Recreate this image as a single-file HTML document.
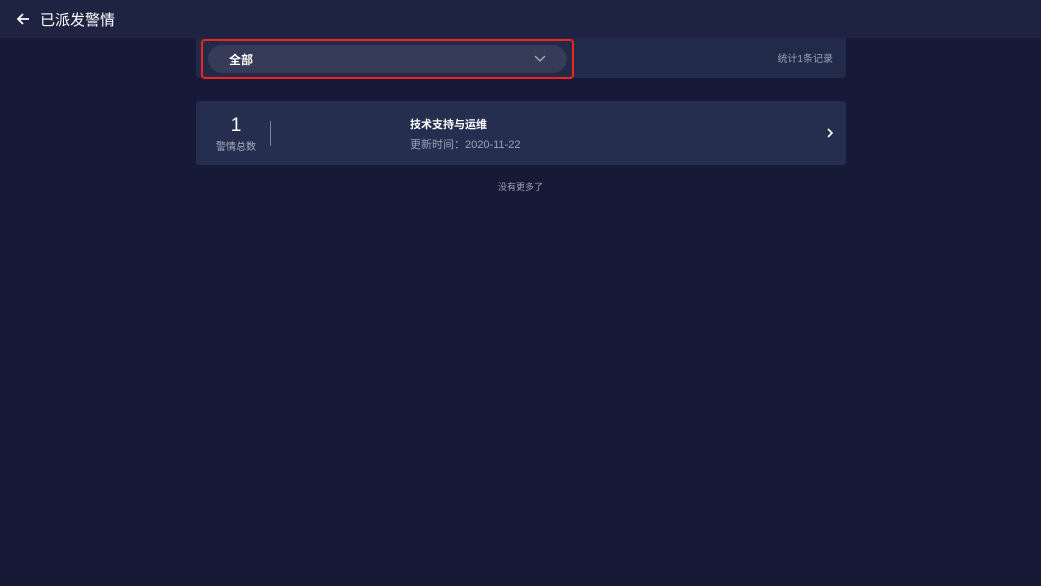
<!DOCTYPE html><html><head><meta charset="utf-8"><style>
body{margin:0;width:1041px;height:586px;background:#161a37;font-family:"Liberation Sans","Noto Sans CJK SC",sans-serif;position:relative;overflow:hidden;color:#fff}
.hd{position:absolute;left:0;top:0;width:1041px;height:38px;background:#1d2341}
.hd .t{position:absolute;left:40px;top:9px;font-size:15px}
.bar{position:absolute;left:196px;top:38px;width:650px;height:40px;background:#222a49;border-radius:0 0 3px 3px}
.red{position:absolute;left:201px;top:39px;width:369px;height:36px;border:2px solid #f0241c;border-radius:4px}
.sel{position:absolute;left:208px;top:45px;width:359px;height:28px;background:#363b57;border-radius:14px}
.sel span{position:absolute;left:21px;top:6px;font-size:12px;font-weight:bold}
.cnt{position:absolute;right:13px;top:12px;font-size:10px;color:#9aa0b4}
.card{position:absolute;left:196px;top:101px;width:650px;height:64px;background:#252e4f;border-radius:3px}
.n{position:absolute;left:0;width:80px;text-align:center;top:14px;font-size:19px}
.nl{position:absolute;left:0;width:80px;text-align:center;top:37px;font-size:10px;color:#aab}
.sep{position:absolute;left:74px;top:20px;width:1px;height:25px;background:#7a8099}
.ti{position:absolute;left:214px;top:15px;font-size:11px;font-weight:bold}
.dt{position:absolute;left:214px;top:35px;font-size:11px;color:#9aa0b4}
.more{position:absolute;left:0;width:1041px;text-align:center;top:180px;font-size:9px;color:#9aa0b4}
</style></head><body>
<div class="hd"><svg style="position:absolute;left:15px;top:11px" width="16" height="16" viewBox="0 0 16 16"><path d="M14 8H3M8 3L3 8l5 5" stroke="#fff" stroke-width="1.8" fill="none"/></svg><div class="t">已派发警情</div></div>
<div class="bar"><div class="cnt">统计1条记录</div></div>
<div class="sel"><span>全部</span><svg style="position:absolute;left:326px;top:9px" width="12" height="10" viewBox="0 0 12 10"><path d="M1 2l5 5 5-5" stroke="#aab" stroke-width="1.3" fill="none"/></svg></div>
<div class="red"></div>
<div class="card"><div class="n">1</div><div class="nl">警情总数</div><div class="sep"></div>
<div class="ti">技术支持与运维</div><div class="dt">更新时间：2020-11-22</div>
<svg style="position:absolute;left:630px;top:27px" width="8" height="10" viewBox="0 0 8 10"><path d="M2 1l4 4-4 4" stroke="#fff" stroke-width="1.6" fill="none"/></svg></div>
<div class="more">没有更多了</div>
</body></html>
